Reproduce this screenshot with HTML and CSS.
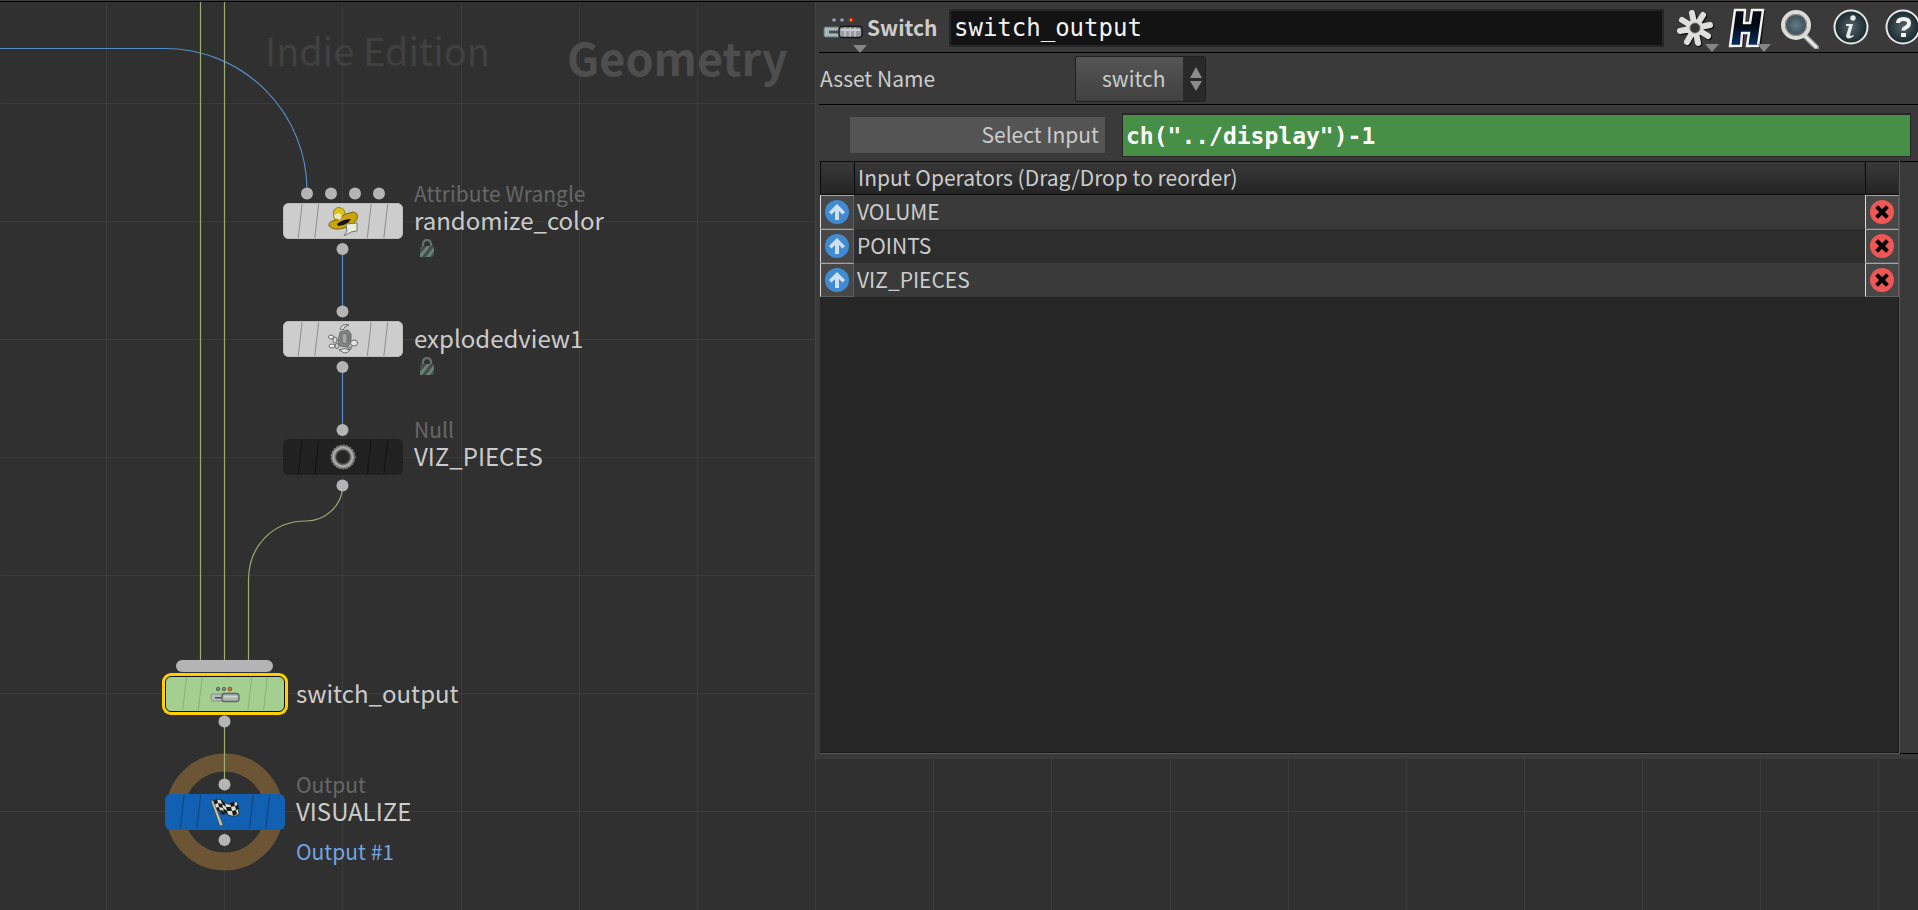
FILE: index.html
```html
<!DOCTYPE html>
<html lang="en">
<head>
<meta charset="utf-8">
<title>Network Editor</title>
<link rel="stylesheet" href="styles.css">
</head>
<body>
<svg class="defs" aria-hidden="true">
  <defs>
    <symbol id="marks" viewBox="0 0 120 37">
      <path d="M18 1L14 36M35 1L31 36M89 1L85 36M106 1L102 36" fill="none" stroke="currentColor" stroke-width="1"/>
    </symbol>
    <symbol id="lock" viewBox="0 0 16 18">
      <path d="M4 9V5a4 4 0 0 1 8 0v4" fill="none" stroke="#607269" stroke-width="2.4"/>
      <rect x="1" y="7" width="14" height="11" rx="2" fill="#42504a"/>
      <path d="M1 15L8 7h3L3 18H1zM7 18L15 8v4l-4 6z" fill="#6d8177"/>
    </symbol>
    <symbol id="up" viewBox="0 0 24 24">
      <circle cx="12" cy="12" r="12" fill="#418bd2"/>
      <path d="M12 4L20 12L17.500 14.500L14 11V20H10V11L6.500 14.500L4 12Z" fill="#cfe0f3"/>
    </symbol>
    <symbol id="remove" viewBox="0 0 24 24">
      <circle cx="12" cy="12" r="12" fill="#f15656"/>
      <path d="M8 8L16 16M16 8L8 16" stroke="#000" stroke-width="4" stroke-linecap="square"/>
    </symbol>
    <symbol id="switch-icon" viewBox="0 0 40 22">
      <circle cx="11" cy="3" r="1.800" fill="#8fa6c4"/><circle cx="19" cy="3" r="1.800" fill="#8fa6c4"/>
      <circle cx="28" cy="3" r="2.400" fill="#d61d08"/><circle cx="28" cy="3" r="1" fill="#ffd028"/>
      <rect x="1" y="10" width="20" height="10" rx="1.500" fill="#a9b9b9" stroke="#617172"/>
      <path d="M6 13.500h10v3H6z" fill="#4a5155"/>
      <rect x="16" y="9.500" width="23" height="11" rx="3" fill="#979ba0" stroke="#131517" stroke-width="1.400"/>
      <path d="M18 12h19v2H18z" fill="#c9cdd2"/><path d="M22 10.500v9M27 10.500v9M32 10.500v9" stroke="#c7cbd2" stroke-width="1.500"/>
    </symbol>
    <symbol id="switch-small" viewBox="0 0 30 30">
      <g stroke="#4d5a4a" stroke-width="1"><circle cx="8" cy="10" r="1.600" fill="#8d9a8c"/><circle cx="14" cy="10" r="1.600" fill="#8d9a8c"/><circle cx="20" cy="10" r="1.800" fill="#ee6d22" stroke="#8a4a20"/></g>
      <rect x="1" y="15" width="14" height="7" rx="1.500" fill="#b4beb8" stroke="#84908a"/><path d="M5 18h8v1.500H5z" fill="#4b4f6a"/>
      <rect x="12" y="14.500" width="17" height="8" rx="2.500" fill="#adb4b1" stroke="#5d6562" stroke-width="1.300"/>
      <path d="M14 17h13v1.500H14z" fill="#d0d5d2"/>
    </symbol>
    <radialGradient id="orb"><stop offset="0" stop-color="#51656c"/><stop offset="1" stop-color="#18272b"/></radialGradient>
    <radialGradient id="lens"><stop offset="0" stop-color="#647985"/><stop offset="1" stop-color="#34434b"/></radialGradient>
    <linearGradient id="navy" x2="0" y2="1"><stop offset=".4" stop-color="#030812"/><stop offset="1" stop-color="#062f66"/></linearGradient>
    <radialGradient id="torus"><stop offset=".5" stop-color="#262626"/><stop offset=".78" stop-color="#b9bab6"/><stop offset="1" stop-color="#55574f"/></radialGradient>
  </defs>
</svg>
<main class="workspace">
  <section class="network" aria-label="Network">
    <svg class="wires" aria-hidden="true">
      <path class="grid-line" d="M106 2V2000M224 2V2000M342 2V2000M461 2V2000M579 2V2000M697 2V2000M815 2V2000M933 2V2000M1051 2V2000M1170 2V2000M1288 2V2000M1406 2V2000M1524 2V2000M1642 2V2000M1760 2V2000M1878 2V2000M0 103H4000M0 221H4000M0 339H4000M0 457H4000M0 575H4000M0 693H4000M0 811H4000"/>
      <circle cx="224.500" cy="812" r="49.500" class="flag-ring"/>
      <path class="wire-blue" d="M0 48.500H165A142 142 0 0 1 307 190M342.500 249V311M342.500 367V430"/>
      <path class="wire-green" d="M200.500 2V662M224.500 2V662M342.500 487C342 506 325 521 306 521C272 521 248.500 547 248.500 580V662M224.500 721V784"/>
      <g class="ports">
        <circle cx="307" cy="193.500" r="6"/><circle cx="331" cy="193.500" r="6"/><circle cx="355" cy="193.500" r="6"/><circle cx="379" cy="193.500" r="6"/>
        <circle cx="342.500" cy="249" r="6"/><circle cx="342.500" cy="311.500" r="6"/><circle cx="342.500" cy="367" r="6"/>
        <circle cx="342.500" cy="430" r="6"/><circle cx="342.500" cy="485.500" r="6"/>
        <rect x="176" y="660" width="97" height="12" rx="6"/>
        <circle cx="224.500" cy="721.500" r="6"/><circle cx="224.500" cy="784.500" r="6"/><circle cx="224.500" cy="840" r="6"/>
      </g>
    </svg>
    <p class="watermark edition">Indie Edition</p>
    <p class="watermark context">Geometry</p>

    <article class="node randomize">
      <div class="body light"><svg class="marks"><use href="#marks"/></svg>
        <svg class="glyph" viewBox="0 0 30 30">
          <path d="M6 4q5-5 10 0l2 8-9 5q-5-6-3-13z" fill="#dcc41b" stroke="#93810f"/>
          <path d="M1 20Q0 15 9 14Q16 7 25 6Q31 7 29 13Q26 19 16 22Q6 25 1 20z" fill="#cda30b" stroke="#7b6507"/>
          <path d="M9 18q6-5 14-5-3 6-13 7z" fill="#17150a"/><path d="M6 9l5-2 3 3-2 4-5-2z" fill="#e9e6c6"/>
          <path d="M18 18l11-1v8l-6 1-7 4 3-5z" fill="#e8efdf" stroke="#6f786d"/>
        </svg></div>
      <div class="caption"><span class="type">Attribute Wrangle</span><span class="name">randomize_color</span><svg class="lock"><use href="#lock"/></svg></div>
    </article>
    <article class="node exploded">
      <div class="body light"><svg class="marks"><use href="#marks"/></svg>
        <svg class="glyph" viewBox="0 0 30 30" stroke="#666a68" stroke-width="1">
          <path d="M12 8l8-2 3 4v9l-4 4-7-1-2-5z" fill="#858987"/><path d="M14 10l5-1v11l-5-1zM21 10v9" fill="#a4a8a6"/>
          <path d="M12 5q2-6 9-4-5 1-6 5zM11 26q5-3 11 0-2 3-6 3z" fill="#dfe3df"/>
          <ellipse cx="3" cy="13" rx="2.500" ry="2" fill="#eee"/><ellipse cx="7" cy="16" rx="2" ry="3" fill="#ddd"/>
          <ellipse cx="4" cy="22" rx="3" ry="2" fill="#eee"/><ellipse cx="9" cy="22" rx="2" ry="2.500" fill="#ccc"/>
          <ellipse cx="26" cy="19" rx="3.500" ry="3" fill="#e5e5e5"/><path d="M19 23l5 0-2 3z" fill="#bbb"/>
        </svg></div>
      <div class="caption"><span class="type"></span><span class="name">explodedview1</span><svg class="lock"><use href="#lock"/></svg></div>
    </article>
    <article class="node pieces">
      <div class="body dark"><svg class="marks"><use href="#marks"/></svg>
        <svg class="glyph" viewBox="0 0 30 30"><circle cx="15" cy="15" r="12" fill="url(#torus)" stroke="#8a8c79" stroke-dasharray="2 1.500"/></svg></div>
      <div class="caption"><span class="type">Null</span><span class="name">VIZ_PIECES</span></div>
    </article>
    <article class="node switcher">
      <div class="body green"><svg class="marks"><use href="#marks"/></svg><svg class="glyph"><use href="#switch-small"/></svg></div>
      <div class="caption"><span class="type"></span><span class="name">switch_output</span></div>
    </article>
    <article class="node visualize">
      <div class="body blue"><svg class="marks"><use href="#marks"/></svg>
        <svg class="glyph" viewBox="0 0 30 30">
          <path d="M3 4Q8 0 14 5T27 4L29 17Q22 22 16 16T7 18z" fill="#dedfca" stroke="#22272d" stroke-width=".800"/>
          <path d="M3 4l4-2 1 4-4 2zM11 3l4 3 1 4-4-3zM20 6l4-1 1 4-4 1zM8 6l4 1 1 4-4-1zM16 10l5 0 1 4-5 0zM25 9l3-1 1 4-3 1zM5 11l4-1 1 4-4 1zM13 11l4 3 1 4-4-3zM22 14l4-1 1 4-4 2zM10 14l4 1 1 3-4-1z" fill="#15191f"/>
          <path d="M1 4l2-1 10 25-3 1z" fill="#c9c8ae" stroke="#46473d" stroke-width=".700"/>
        </svg></div>
      <div class="caption"><span class="type">Output</span><span class="name">VISUALIZE</span><span class="note">Output #1</span></div>
    </article>
  </section>

  <section class="panel" aria-label="Parameters">
    <header class="title-bar">
      <button class="op-button" aria-label="Operator type menu"><svg width="40" height="22"><use href="#switch-icon"/></svg><i class="drop"></i></button>
      <label class="op-type" for="op-name">Switch</label>
      <input class="op-name" id="op-name" value="switch_output" spellcheck="false">
      <div class="tools">
        <button aria-label="Settings"><svg width="40" height="42" viewBox="0 0 40 42"><g transform="translate(1 1)" stroke="#151515" stroke-width="6.500" stroke-linecap="round"><path d="M20 21L17 6M20 21L28 8M20 21L35 18M20 21L33 29M20 21L23 36M20 21L12 35M20 21L5 24M20 21L7 13"/></g><g stroke="#dfdfdb" stroke-width="6" stroke-linecap="round"><path d="M20 21L17 6M20 21L28 8M20 21L35 18M20 21L33 29M20 21L23 36M20 21L12 35M20 21L5 24M20 21L7 13"/></g><circle cx="20" cy="21" r="8.500" fill="#dfdfdb"/><circle cx="20" cy="21" r="5" fill="#343434" stroke="#777"/></svg><i class="drop"></i></button>
        <button aria-label="Houdini menu"><svg width="40" height="42" viewBox="0 0 40 42"><path d="M8 3H17L16 17H23L24 3H36L32 40H21L22 26H15L14 40H4Z" fill="#151515" transform="translate(2 1)"/><path d="M8 3H18L17 16H23L25 3H36L31 39H20L22 26H15L14 39H3Z" fill="url(#navy)" stroke="#f3f2ee" stroke-width="2.400"/></svg><i class="drop"></i></button>
        <button aria-label="Search"><svg width="40" height="42" viewBox="0 0 40 42"><path d="M26 29L38 41" stroke="#8f9394" stroke-width="5.500" stroke-linecap="round"/><path d="M26 29L37 40" stroke="#e8e8e6" stroke-width="3" stroke-linecap="round"/><circle cx="17" cy="18" r="13" fill="url(#lens)" stroke="#dcddd9" stroke-width="4"/><circle cx="17" cy="18" r="10.500" fill="none" stroke="#9ba0a0"/></svg></button>
        <button aria-label="Info"><svg width="40" height="42" viewBox="0 0 40 42"><circle cx="20" cy="20" r="16.500" fill="url(#orb)" stroke="#e7e8e5" stroke-width="2"/><circle cx="22" cy="11" r="2.700" fill="#e8e8e5"/><path d="M15 17h7l-3 11q0 2 3 0l1 1q-7 5-8 0l3-10h-3z" fill="#e8e8e5"/></svg></button>
        <button aria-label="Help"><svg width="40" height="42" viewBox="0 0 40 42"><circle cx="20" cy="20" r="16.500" fill="url(#orb)" stroke="#e7e8e5" stroke-width="2"/><path d="M15 16q0-4 5.500-4t5.500 4q0 3-3 4.500-2.500 1-2.500 3" fill="none" stroke="#f3f3f0" stroke-width="4"/><path d="M18 26h5v4h-5z" fill="#f3f3f0"/></svg></button>
      </div>
    </header>

    <div class="asset-row">
      <label for="asset">Asset Name</label>
      <div class="combo">
        <select id="asset"><option>switch</option></select>
        <svg class="spin" viewBox="0 0 12 24" aria-hidden="true"><path d="M6 0L12 11H0ZM6 24L0 14H12Z" fill="#8b8b8b"/></svg>
      </div>
    </div>

    <div class="input-row">
      <label for="select-input">Select Input</label>
      <input id="select-input" value='ch("../display")-1' spellcheck="false">
    </div>

    <div class="list">
      <div class="list-view">
        <table>
          <thead><tr><th class="tool"></th><th>Input Operators (Drag/Drop to reorder)</th><th class="tool"></th></tr></thead>
          <tbody>
            <tr><td class="tool"><button aria-label="Move VOLUME up"><svg><use href="#up"/></svg></button></td><td>VOLUME</td><td class="tool"><button aria-label="Remove VOLUME"><svg><use href="#remove"/></svg></button></td></tr>
            <tr><td class="tool"><button aria-label="Move POINTS up"><svg><use href="#up"/></svg></button></td><td>POINTS</td><td class="tool"><button aria-label="Remove POINTS"><svg><use href="#remove"/></svg></button></td></tr>
            <tr><td class="tool"><button aria-label="Move VIZ_PIECES up"><svg><use href="#up"/></svg></button></td><td>VIZ_PIECES</td><td class="tool"><button aria-label="Remove VIZ_PIECES"><svg><use href="#remove"/></svg></button></td></tr>
          </tbody>
        </table>
      </div>
      <div class="gutter"></div>
    </div>
  </section>
</main>
</body>
</html>
```
FILE: styles.css
```css
* { box-sizing: border-box; }

body {
  margin: 0;
  background: #303030;
  color: #cccccc;
  font: 21px/26px "Noto Sans CJK SC", "Open Sans", sans-serif;
  overflow: hidden;
}

button {
  padding: 0;
  border: 0;
  background: none;
}

svg { display: block; }

.defs {
  position: absolute;
  width: 0;
  height: 0;
}

.workspace {
  position: relative;
  display: grid;
  grid-template-columns: 815fr 1103fr;
  grid-template-rows: 757fr 151fr;
  height: 100vh;
  padding-top: 1px;
  border-top: 1px solid #3c3c3c;
  box-shadow: inset 0 1px #000;
  overflow: hidden;
}

/* Network canvas */

.network {
  position: absolute;
  inset: -1px 0 0;
  overflow: hidden;
  z-index: -1;
}

.wires {
  position: absolute;
  inset: 0;
  width: 100%;
  height: 100%;
  fill: none;
}

.grid-line { stroke: #3b3b3b; stroke-width: 1; transform: translate(0.5px, 0.5px); }
.flag-ring { stroke: #6b5535; stroke-width: 18; }
.wire-blue { stroke: #558cc8; stroke-width: 1.2; }
.wire-green { stroke: #97ae6e; stroke-width: 1.2; }
.ports { fill: #b4b4b4; }

.watermark {
  position: absolute;
  margin: 0;
  white-space: nowrap;
}

.edition {
  left: 265px;
  top: 28px;
  color: #414141;
  font-size: 38px;
  line-height: 44px;
}

.context {
  left: 567px;
  top: 31px;
  color: #4e4e4e;
  font-size: 45px;
  font-weight: 700;
  line-height: 52px;
}

.node {
  position: absolute;
  width: 120px;
  height: 36px;
}

.randomize { left: 283px; top: 203px; }
.exploded { left: 283px; top: 321px; }
.pieces { left: 283px; top: 439px; }
.switcher { left: 165px; top: 676px; }
.visualize { left: 165px; top: 794px; }

.body {
  position: relative;
  display: flex;
  justify-content: center;
  align-items: center;
  height: 100%;
  border-radius: 6px;
}

.marks {
  position: absolute;
  inset: 0;
  width: 100%;
  height: 100%;
}

.glyph {
  position: relative;
  width: 30px;
  height: 30px;
}

.light { background: #cdcdcd; color: #8c8c8c; box-shadow: inset 0 0 0 1px #bdbdbd; }
.dark { background: #212121; color: #111111; }
.green {
  background: #a5cf90;
  color: #86ad73;
  border: 1px solid #101010;
  box-shadow: 0 0 0 3px #ffd000;
}
.blue { background: #1260b1; color: #0b417c; }

.caption {
  position: absolute;
  left: 131px;
  top: -23px;
  display: flex;
  flex-direction: column;
  white-space: nowrap;
}

.type { height: 25px; color: #676767; }
.name { font-size: 24px; line-height: 29px; }
.note { margin-top: 13px; color: #73a5e1; }
.lock { width: 16px; height: 18px; margin: 5px 0 0 5px; }

/* Parameter panel */

.panel {
  grid-column: 2;
  display: flex;
  flex-direction: column;
  min-width: 0;
  padding: 1px 0 5px 3px;
  background: #3a3a3a;
  border-left: 1px solid #444444;
  overflow: hidden;
}

.title-bar {
  display: flex;
  align-items: center;
  height: 50px;
  border-bottom: 1px solid #000;
}

.title-bar button {
  position: relative;
  flex: none;
}

.op-button {
  width: 40px;
  margin: 0 4px;
}

.drop {
  position: absolute;
  right: -4px;
  bottom: -3px;
  border: 7px solid transparent;
  border-top: 8px solid #858585;
  border-bottom: 0;
}

.op-button .drop { bottom: -14px; }

.op-type {
  width: 82px;
  padding-bottom: 2px;
  font-weight: 700;
}

.op-name {
  flex: 1;
  min-width: 0;
  height: 38px;
  padding: 0 4px 0 3px;
  border: 2px solid #272727;
  background: #131313;
  color: #f4f4f4;
  font: 24px/34px "DejaVu Sans Mono", monospace;
}

.tools {
  display: flex;
  flex: none;
  gap: 12px;
  margin: 0 -5px 0 11px;
}

.asset-row {
  display: flex;
  align-items: center;
  height: 52px;
  padding-left: 1px;
  border-bottom: 1px solid #000;
}

.asset-row label {
  width: 255px;
  padding-bottom: 2px;
}

.combo {
  position: relative;
  width: 131px;
  height: 46px;
}

.combo select {
  width: 100%;
  height: 100%;
  padding: 0 24px 1px 26px;
  appearance: none;
  border: 1px solid #202020;
  border-radius: 2px;
  background: linear-gradient(90deg, transparent 107px, #292929 107px), linear-gradient(#555555, #404040);
  color: #cccccc;
  font: inherit;
}

.spin {
  position: absolute;
  right: 4px;
  top: 11px;
  width: 12px;
  height: 24px;
}

.input-row {
  display: flex;
  align-items: center;
  gap: 17px;
  height: 56px;
  padding: 4px 7px 0 31px;
}

.input-row label {
  width: 255px;
  padding: 4px 6px 6px;
  background: #545454;
  text-align: right;
}

.input-row input {
  flex: 1;
  min-width: 0;
  height: 44px;
  padding: 0 3px 0;
  border: 1px solid #262626;
  border-top-width: 2px;
  background: #478e47;
  color: #ffffff;
  font: 700 23px/40px "DejaVu Sans Mono", monospace;
}

.list {
  display: flex;
  flex: 1;
  padding-left: 1px;
}

.list-view {
  flex: 1;
  border-right: 1px solid #575757;
  border-bottom: 1px solid #575757;
  background: #262626;
  box-shadow: inset -1px -1px #181818;
}

.gutter {
  width: 18px;
  border: solid #000;
  border-width: 1px 0;
}

table {
  width: 100%;
  border-collapse: separate;
  border-spacing: 0;
  table-layout: fixed;
}

th, td {
  height: 34px;
  padding: 0 3px 3px;
  font-weight: 400;
  text-align: left;
}

th {
  border: 1px solid #0c0c0c;
  border-right-color: #2c2c2c;
  background: linear-gradient(#393939, #242424);
}

tbody tr { background: #3a3a3a; }
tbody tr:nth-child(even) { background: #2d2d2d; }

.tool {
  width: 34px;
  padding: 0;
}

.tool button {
  display: flex;
  align-items: center;
  justify-content: center;
  width: 100%;
  height: 34px;
  border: 1px solid #5e5e5e;
  border-left-color: #dddddd;
  border-top-color: #a5a5a5;
  background: #474747;
}

.tool svg {
  width: 24px;
  height: 24px;
}
```
